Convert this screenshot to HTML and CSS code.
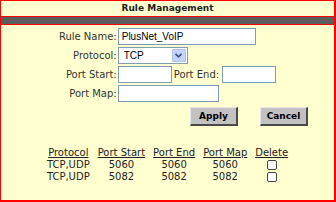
FILE: index.html
```html
<!DOCTYPE html>
<html lang="en">
<head>
  <meta charset="UTF-8">
  <title>Rule Management</title>
  <link rel="stylesheet" href="styles.css">
</head>
<body>
  <div class="frame">
    <div class="title">Rule Management</div>
    <div class="bar"></div>

    <form class="rule-form">
      <table class="fields">
        <tr>
          <td class="label">Rule Name:</td>
          <td><input class="text wide" type="text" value="PlusNet_VoIP"></td>
        </tr>
        <tr>
          <td class="label">Protocol:</td>
          <td>
            <span class="select">
              <select><option>TCP</option><option>UDP</option><option>TCP,UDP</option></select>
              <span class="arrow">
                <svg width="7" height="5" viewBox="0 0 7 5"><path d="M0.5 0.8 L3.5 3.8 L6.5 0.8" fill="none" stroke="#3d4f7a" stroke-width="1.6"/></svg>
              </span>
            </span>
          </td>
        </tr>
        <tr>
          <td class="label">Port Start:</td>
          <td class="pair">
            <input class="text short" type="text">
            <span class="sub-label">Port End:</span>
            <input class="text short" type="text">
          </td>
        </tr>
        <tr>
          <td class="label">Port Map:</td>
          <td><input class="text mid" type="text"></td>
        </tr>
      </table>

      <div class="actions">
        <button type="button" class="btn">Apply</button>
        <button type="button" class="btn">Cancel</button>
      </div>
    </form>

    <table class="rules">
      <tr>
        <th>Protocol</th>
        <th>Port Start</th>
        <th>Port End</th>
        <th>Port Map</th>
        <th>Delete</th>
      </tr>
      <tr>
        <td>TCP,UDP</td>
        <td>5060</td>
        <td>5060</td>
        <td>5060</td>
        <td><input class="check" type="checkbox"></td>
      </tr>
      <tr>
        <td>TCP,UDP</td>
        <td>5082</td>
        <td>5082</td>
        <td>5082</td>
        <td><input class="check" type="checkbox"></td>
      </tr>
    </table>
  </div>
</body>
</html>
```

FILE: styles.css
```css
* {
  box-sizing: border-box;
}

body {
  margin: 0;
  font-family: "DejaVu Sans", Verdana, sans-serif;
  font-size: 10px;
  color: #222;
}

.frame {
  width: 336px;
  height: 202px;
  background: #ffffd0;
  border: 1px solid #ff0000;
  border-right-width: 2px;
  border-bottom-width: 2px;
}

.title {
  height: 16px;
  line-height: 15px;
  text-align: center;
  font-size: 9px;
  font-weight: bold;
  color: #1e1e1e;
  border-bottom: 1px solid #ff0000;
}

.bar {
  height: 8px;
  background: #5c5c5c;
  border-bottom: 1px solid #ff0000;
}

.fields {
  margin: 2px auto 0;
  border-spacing: 0;
}

.fields td {
  padding: 1px 0;
  height: 19px;
}

.fields .label {
  text-align: right;
  padding-right: 1px;
  color: #333;
}

.text {
  height: 17px;
  border: 1px solid #7f9db9;
  padding: 0 3px;
  background: #fff;
  font-family: "Liberation Sans", Arial, sans-serif;
  font-size: 10px;
  color: #000;
  display: block;
}

.wide { width: 138px; }
.mid { width: 101px; }
.short { width: 54px; }

.pair {
  display: flex;
  align-items: center;
}

.sub-label {
  margin: 0 3px 0 2px;
  color: #333;
}

.select {
  display: flex;
  width: 70px;
  height: 17px;
  border: 1px solid #7f9db9;
  background: #fff;
}

.select select {
  appearance: none;
  -webkit-appearance: none;
  flex: 1;
  min-width: 0;
  border: 0;
  outline: none;
  padding: 0 0 0 5px;
  background: transparent;
  font-family: "Liberation Sans", Arial, sans-serif;
  font-size: 10px;
  color: #000;
}

.arrow {
  width: 14px;
  margin: 1px;
  background: #c4d3fb;
  border: 1px solid #b2c4ee;
  border-radius: 1px;
  display: flex;
  align-items: center;
  justify-content: center;
}

.actions {
  display: flex;
  justify-content: flex-end;
  gap: 22px;
  margin-top: 4px;
  padding-right: 26px;
}

.btn {
  width: 48px;
  height: 19px;
  padding: 0;
  background: #c2c2c2;
  border: 1px solid;
  border-right-width: 2px;
  border-bottom-width: 2px;
  border-color: #e6e6e6 #4a4a4a #4a4a4a #e6e6e6;
  font-family: "DejaVu Sans", Verdana, sans-serif;
  font-size: 9px;
  font-weight: bold;
  color: #000;
}

.rules {
  margin: 21px auto 0;
  border-spacing: 0;
  line-height: 12px;
}

.rules th,
.rules td {
  padding: 0 4px;
  height: 12px;
  text-align: center;
  font-weight: normal;
}

.rules th {
  text-decoration: underline;
}

.check {
  appearance: none;
  -webkit-appearance: none;
  display: block;
  width: 10px;
  height: 10px;
  margin: 0 auto;
  background: #fff;
  border: 1px solid #444;
  border-radius: 2px;
}
```
